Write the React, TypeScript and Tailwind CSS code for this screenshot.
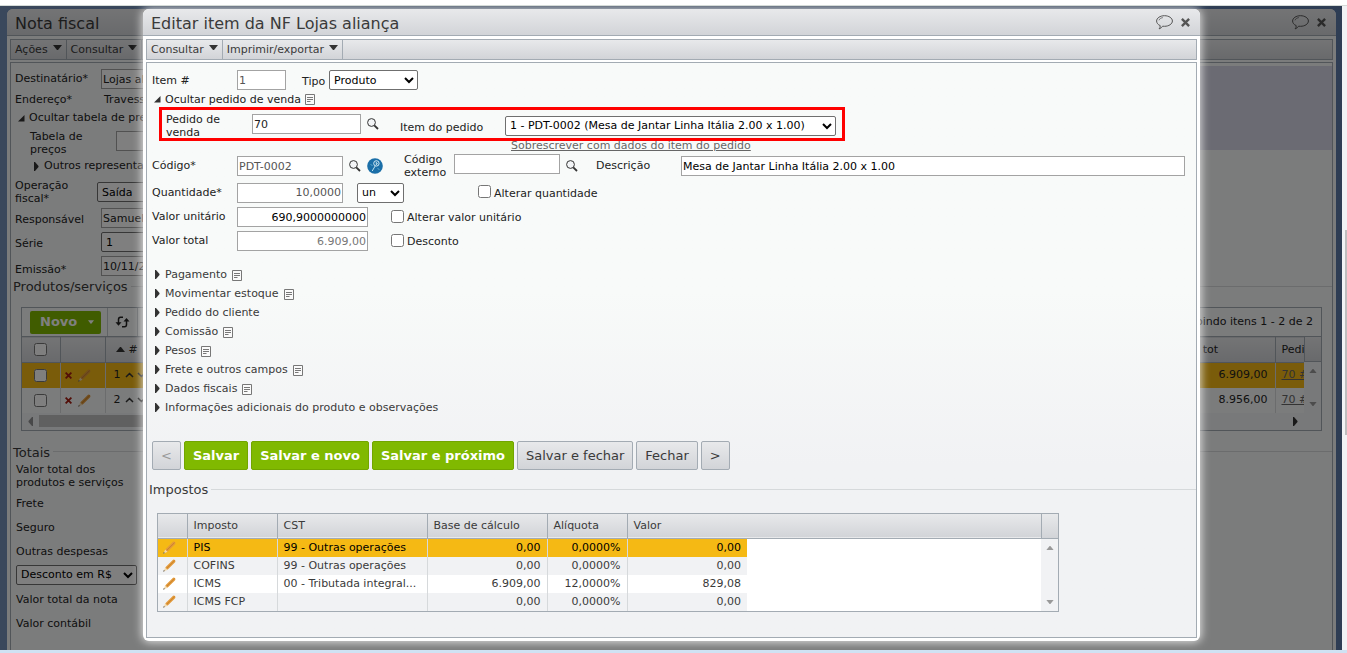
import type { ReactNode } from 'react';
import clsx from 'clsx';

interface IconProps {
  className?: string;
}

interface TaxRow {
  name: string;
  cst: string;
  base: string;
  rate: string;
  value: string;
}

interface SectionItem {
  label: string;
  note: boolean;
}

const sections: SectionItem[] = [
  { label: 'Pagamento', note: true },
  { label: 'Movimentar estoque', note: true },
  { label: 'Pedido do cliente', note: false },
  { label: 'Comissão', note: true },
  { label: 'Pesos', note: true },
  { label: 'Frete e outros campos', note: true },
  { label: 'Dados fiscais', note: true },
  { label: 'Informações adicionais do produto e observações', note: false },
];

const taxes: TaxRow[] = [
  { name: 'PIS', cst: '99 - Outras operações', base: '0,00', rate: '0,0000%', value: '0,00' },
  { name: 'COFINS', cst: '99 - Outras operações', base: '0,00', rate: '0,0000%', value: '0,00' },
  { name: 'ICMS', cst: '00 - Tributada integral...', base: '6.909,00', rate: '12,0000%', value: '829,08' },
  { name: 'ICMS FCP', cst: '', base: '0,00', rate: '0,0000%', value: '0,00' },
];

const items = [
  { id: '1', total: '6.909,00' },
  { id: '2', total: '8.956,00' },
];

const bar = 'bg-linear-to-b from-[#e8e9eb] to-[#d2d4d8]';
const field = 'h-5 border border-[#a3a3a3] bg-white px-px text-[11px]';
const dropdown = 'h-5 rounded-[2px] border border-[#6f6f6f] bg-white text-[11px] text-black';

function SearchIcon() {
  return (
    <svg className="h-3 w-3" viewBox="0 0 12 12" fill="none" stroke="#333">
      <circle cx="4.5" cy="4.5" r="3.9" fill="#f3f5f7" />
      <path d="M7.3 7.3 11 11" strokeWidth="1.8" />
    </svg>
  );
}

function NoteIcon() {
  return (
    <svg className="h-[11px] w-[10px]" viewBox="0 0 10 11" fill="none" stroke="#777">
      <path d="M.5.5h9v10h-9z" fill="#fafafa" />
      <path d="M2 3.5h6M2 5.5h6M2 7.5h3.5" />
    </svg>
  );
}

function PencilIcon() {
  return (
    <svg className="h-[13px] w-[13px]" viewBox="0 0 13 13">
      <path d="M2.2 8.6 9.8 1q1-.8 2.1.1t.2 2.2l-7.6 7.5z" fill="#e39a3b" />
      <path d="M3.4 9.7 11.6 1.6" stroke="#c07a25" strokeWidth=".7" />
      <path d="m2.2 8.6 2.3 2.2-4.2 1.9z" fill="#f3d9ac" />
      <path d="m.9 11 .9.9-1.6.9z" fill="#444" />
    </svg>
  );
}

function BubbleIcon() {
  return (
    <svg className="h-[15px] w-[17px]" viewBox="0 0 17 15" fill="none" stroke="#555">
      <path d="M4.2 10.6C2 9.7.6 8 .6 6 .6 3.100 4.100.7 8.500.7s7.900 2.400 7.900 5.300-3.500 5.300-7.900 5.300c-.7 0-1.300 0-1.900-.1-.7 1.200-2 2.200-3.500 2.700.8-.9 1.200-2 1.100-3.300z" />
      <path d="M3 5.300C3.400 3.800 5 2.900 6.800 2.600" strokeWidth=".8" />
    </svg>
  );
}

function CloseIcon() {
  return (
    <svg className="h-[9px] w-[9px]" viewBox="0 0 9 9" stroke="#555" strokeWidth="2.4">
      <path d="m.9.9 7.2 7.2M8.1.9.9 8.1" />
    </svg>
  );
}

function LookupIcon() {
  return (
    <svg className="h-4 w-4" viewBox="0 0 16 16" fill="none">
      <circle cx="8" cy="8" r="7.8" fill="#1b6fa8" />
      <circle cx="9.4" cy="5.4" r="2.7" stroke="#d5ecf5" />
      <path d="M8.2 8 5.2 13M9.3 3.8v3l1.500-1.500" stroke="#bfe3ef" />
      <path d="m3.500 6.500 2 1M10.500 10.500l2 1" stroke="#5fa9cc" />
    </svg>
  );
}

function RefreshIcon() {
  return (
    <svg className="h-3 w-[15px]" viewBox="0 0 15 12" fill="none" stroke="#222" strokeWidth="1.5">
      <path d="M8 1.200H5.500Q3.500 1.200 3.500 3.500v4M7 10.800h2.500q2 0 2-2.300v-4" />
      <path d="M.5 6.200h6l-3 3.600zM8.500 5.600h6l-3-3.600z" fill="#222" stroke="none" />
    </svg>
  );
}

function Triangle({ className }: IconProps) {
  return (
    <svg className={clsx('h-[9px] w-[5px]', className)} viewBox="0 0 5 9" fill="#333">
      <path d="M0 0h1l3.500 4v1L1 9H0z" />
    </svg>
  );
}

function OpenTriangle() {
  return (
    <svg className="h-[7px] w-[7px]" viewBox="0 0 7 7" fill="#333">
      <path d="M6.500 0v6.500H0z" />
    </svg>
  );
}

function Caret({ up = false, className = 'h-[5px] w-[9px] text-[#333]' }: { up?: boolean; className?: string }) {
  return (
    <svg className={className} viewBox="0 0 9 5" fill="currentColor">
      <path d={up ? 'M0 5 4 0h1l4 5z' : 'M0 0h9L5 5H4z'} />
    </svg>
  );
}

function TitleBar({ title }: { title: string }) {
  return (
    <header className={clsx('flex h-[27px] items-center justify-between rounded-t-md border-b border-[#a3abb3] pr-[10px] pl-2', bar)}>
      <h2 className="pt-1 text-[16px] leading-5 text-[#3a3a3a]">{title}</h2>
      <div className="flex items-center gap-2">
        <button aria-label="Comentários"><BubbleIcon /></button>
        <button aria-label="Fechar janela"><CloseIcon /></button>
      </div>
    </header>
  );
}

function MenuBar({ entries }: { entries: string[] }) {
  return (
    <nav className={clsx('mx-[3px] mt-[3px] flex h-[21px] border border-[#a3abb3]', bar)}>
      {entries.map((entry) => (
        <button key={entry} className="flex items-center gap-[5px] border-r border-[#a3abb3] px-1 text-[#3a3a3a]">
          {entry}
          <span className="pb-1"><Caret /></span>
        </button>
      ))}
    </nav>
  );
}

function Legend({ children }: { children: ReactNode }) {
  return (
    <div className="flex items-center gap-[3px] pl-[2px] text-[13px] leading-4 text-[#3a3a3a]">
      <h3>{children}</h3>
      <div className="mb-[2px] h-px flex-1 bg-[#d6d9db]" />
    </div>
  );
}

function ActionButton({ children, primary = false, disabled = false }: { children: ReactNode; primary?: boolean; disabled?: boolean }) {
  return (
    <button
      disabled={disabled}
      className={clsx(
        'h-[29px] rounded-[2px] border px-2 text-[13px]',
        primary ? 'border-[#72a500] bg-[#80b900] font-bold text-white' : clsx('border-[#a3abb3]', bar),
        !primary && (disabled ? 'text-[#999]' : 'text-[#3a3a3a]')
      )}
    >
      {children}
    </button>
  );
}

function CheckOption({ label, className }: { label: string; className: string }) {
  return (
    <label className={clsx('flex items-center gap-[3px]', className)}>
      <input type="checkbox" className="mb-[2px] h-[13px] w-[13px]" />
      <span className="pt-[2px]">{label}</span>
    </label>
  );
}

function InvoiceItems() {
  return (
    <div className="mx-[10px] mt-3 border border-[#a3abb3]">
      <div className="flex h-7 items-center pr-2 pl-2">
        <button className="flex h-[23px] w-[71px] items-center justify-between rounded-[2px] bg-[#80b900] pr-[7px] pl-[10px] text-[13px] font-bold text-white">
          Novo <Caret className="h-[6px] w-[6px] text-white" />
        </button>
        <button aria-label="Atualizar" className="ml-[6px] flex h-full w-[31px] items-center justify-center border-x border-[#c3c8cd]">
          <RefreshIcon />
        </button>
        <span className="ml-auto">Exibindo itens 1 - 2 de 2</span>
      </div>
      <div className="flex">
        <div className="min-w-0 flex-1">
          <table className="w-full table-fixed text-left">
            <colgroup>
              <col className="w-[38px]" />
              <col className="w-[45px]" />
              <col />
              <col className="w-[110px]" />
              <col className="w-[29px]" />
            </colgroup>
            <thead>
              <tr className={clsx('h-[26px] border-y border-[#a3abb3]', bar)}>
                <th className="border-r border-[#a3abb3] text-center"><input type="checkbox" aria-label="Selecionar todos" className="mx-auto block h-[13px] w-[13px]" /></th>
                <th className="border-r border-[#a3abb3]" />
                <th className="border-r border-[#a3abb3] pl-[10px] font-normal"><span className="flex items-center gap-1"><Caret up /> #</span></th>
                <th className="border-r border-[#a3abb3] pl-[6px] font-normal">Valor tot</th>
                <th className="overflow-hidden pl-[6px] font-normal whitespace-nowrap">Pedido</th>
              </tr>
            </thead>
            <tbody>
              {items.map((item, index) => (
                <tr key={item.id} className={clsx('h-[25px]', index === 0 && 'bg-[#f5b914]')}>
                  <td className="border-r border-[#d6d9db]"><input type="checkbox" aria-label={`Selecionar item ${item.id}`} className="ml-3 block h-[13px] w-[13px]" /></td>
                  <td className="border-r border-[#d6d9db]">
                    <div className="flex items-center gap-[6px] pl-1">
                      <button aria-label="Excluir">
                        <svg className="h-[7px] w-[7px]" viewBox="0 0 7 7" stroke="#a51c10" strokeWidth="1.8"><path d="m.6.6 5.800 5.800M6.400.6.6 6.400" /></svg>
                      </button>
                      <button aria-label="Editar"><PencilIcon /></button>
                    </div>
                  </td>
                  <td className="pl-2">
                    <span className="flex items-center gap-1">
                      {item.id}
                      <svg className="h-[6px] w-5" viewBox="0 0 20 6" fill="none" stroke="#333" strokeWidth="1.5"><path d="m1 5 3.500-3.500L8 5M13 1l3.500 3.500L20 1" /></svg>
                    </span>
                  </td>
                  <td className="border-r border-[#d6d9db] pr-[7px] text-right">{item.total}</td>
                  <td className="overflow-hidden pl-[6px] whitespace-nowrap"><a href="#" className="text-[#666] underline">70 #1</a></td>
                </tr>
              ))}
            </tbody>
          </table>
        </div>
        <div className="flex w-[17px] flex-col">
          <div className={clsx('h-[26px] border-y border-l border-[#a3abb3]', bar)} />
          <div className="flex flex-1 flex-col items-center justify-between bg-[#f1f2f4] py-[7px]">
            <Caret up className="h-1 w-2 text-[#999]" />
            <Caret className="h-1 w-2 text-[#999]" />
          </div>
        </div>
      </div>
      <div className="flex h-[17px] items-center bg-[#f1f2f4] pl-[6px]">
        <Triangle className="rotate-180 opacity-50" />
        <div className="ml-[6px] h-3 w-3/5 bg-[#c1c1c1]" />
        <Triangle className="mr-[23px] ml-auto" />
      </div>
    </div>
  );
}

function InvoiceWindow() {
  return (
    <section className="mr-[6px] ml-[7px] flex-1 rounded-t-md bg-[#f7f8f8] text-[#222]">
      <TitleBar title="Nota fiscal" />
      <MenuBar entries={['Ações', 'Consultar']} />
      <div className="mx-[3px] mt-[2px] min-h-full border border-[#a3abb3]">
        <div className="flex justify-between pt-[3px]">
          <div className="pl-1">
            <div className="flex h-[26px] items-center">
              <label htmlFor="dest" className="w-[86px]">Destinatário*</label>
              <input id="dest" className={clsx(field, 'w-[220px]')} defaultValue="Lojas aliança" />
            </div>
            <div className="flex h-4 items-center">
              <span className="w-[89px]">Endereço*</span>
              <span>Travessa</span>
            </div>
            <button className="flex h-5 items-center gap-1 pl-[3px]"><OpenTriangle />Ocultar tabela de preços</button>
            <div className="flex h-[30px] items-center pl-[15px]">
              <label htmlFor="precos" className="w-[86px] pr-6 leading-[13px]">Tabela de preços</label>
              <input id="precos" className={clsx(field, 'mb-1 w-[180px]')} />
            </div>
            <button className="flex h-4 items-center gap-[5px] pl-[19px]"><Triangle />Outros representantes</button>
            <div className="flex h-8 items-center pt-1">
              <label htmlFor="operacao" className="w-[82px] pr-5 leading-[13px]">Operação fiscal*</label>
              <select id="operacao" className={clsx(dropdown, 'w-[110px]')}><option>Saída</option></select>
            </div>
            <div className="flex h-6 items-center">
              <label htmlFor="resp" className="w-[86px] pt-1">Responsável</label>
              <input id="resp" className={clsx(field, 'w-[220px]')} defaultValue="Samuel" />
            </div>
            <div className="flex h-6 items-center">
              <label htmlFor="serie" className="w-[86px] pt-1">Série</label>
              <select id="serie" className={clsx(dropdown, 'w-[110px]')}><option>1</option></select>
            </div>
            <div className="flex h-6 items-center">
              <label htmlFor="emissao" className="w-[86px] pt-2">Emissão*</label>
              <input id="emissao" className={clsx(field, 'w-[110px]')} defaultValue="10/11/2021" />
            </div>
          </div>
          <div className="h-[84px] w-1/3 bg-[#d6d6e6]" />
        </div>
        <div className="mt-px"><Legend>Produtos/serviços</Legend></div>
        <InvoiceItems />
        <div className="mt-[14px]"><Legend>Totais</Legend></div>
        <div className="flex flex-col items-start pl-[5px]">
          <span className="mt-[2px] w-[125px] leading-[13px]">Valor total dos produtos e serviços</span>
          <span className="mt-[3px] leading-6">Frete</span>
          <span className="leading-6">Seguro</span>
          <span className="leading-6">Outras despesas</span>
          <select aria-label="Tipo de desconto" className={clsx(dropdown, 'my-px w-[121px]')}><option>Desconto em R$</option></select>
          <span className="mt-[2px] leading-6">Valor total da nota</span>
          <span className="leading-6">Valor contábil</span>
        </div>
      </div>
    </section>
  );
}

function OrderFields() {
  return (
    <>
      <button className="ml-[7px] flex h-[15px] items-center gap-1">
        <OpenTriangle />
        Ocultar pedido de venda
        <NoteIcon />
      </button>
      <div className="ml-3 flex h-[34px] w-[686px] items-center border-3 border-[#ff0000] pl-1">
        <label htmlFor="pedido" className="w-[86px] pt-1 pr-6 leading-[13px]">Pedido de venda</label>
        <input id="pedido" className={clsx(field, 'w-[109px]')} defaultValue="70" />
        <button aria-label="Buscar pedido" className="mx-[6px]"><SearchIcon /></button>
        <label htmlFor="itemPedido" className="ml-[15px] w-[105px] pt-2">Item do pedido</label>
        <select id="itemPedido" className={clsx(dropdown, 'mt-[3px] w-[331px]')}>
          <option>1 - PDT-0002 (Mesa de Jantar Linha Itália 2.00 x 1.00)</option>
        </select>
      </div>
      <div className="flex h-[11px] items-center pb-[2px] pl-[364px] leading-3">
        <a href="#" className="text-[#666] underline">Sobrescrever com dados do item do pedido</a>
      </div>
    </>
  );
}

function ProductFields() {
  return (
    <>
      <div className="flex h-7 items-center pr-[11px] pl-[5px]">
        <label htmlFor="codigo" className="w-[85px]">Código*</label>
        <input id="codigo" className={clsx(field, 'w-[106px] text-[#555]')} defaultValue="PDT-0002" />
        <button aria-label="Buscar código" className="ml-[6px]"><SearchIcon /></button>
        <button aria-label="Consultar produto" className="ml-[6px]"><LookupIcon /></button>
        <label htmlFor="externo" className="ml-[21px] w-[50px] leading-[13px]">Código externo</label>
        <input id="externo" className={clsx(field, 'mb-1 w-[106px]')} />
        <button aria-label="Buscar código externo" className="ml-[6px]"><SearchIcon /></button>
        <label htmlFor="descricao" className="ml-[18px] w-[85px]">Descrição</label>
        <input id="descricao" className={clsx(field, 'min-w-0 flex-1 text-black')} defaultValue="Mesa de Jantar Linha Itália 2.00 x 1.00" />
      </div>
      <div className="flex h-[25px] items-center pl-[5px]">
        <label htmlFor="quantidade" className="w-[85px]">Quantidade*</label>
        <input id="quantidade" className={clsx(field, 'w-[106px] text-right text-[#555]')} defaultValue="10,0000" />
        <select aria-label="Unidade" className={clsx(dropdown, 'ml-[14px] w-[47px]')}><option>un</option></select>
        <CheckOption label="Alterar quantidade" className="ml-[74px]" />
      </div>
      <div className="flex h-6 items-center pl-[5px]">
        <label htmlFor="unitario" className="w-[85px]">Valor unitário</label>
        <input id="unitario" className={clsx(field, 'w-[131px] text-right text-black')} defaultValue="690,9000000000" />
        <CheckOption label="Alterar valor unitário" className="ml-[23px]" />
      </div>
      <div className="flex h-6 items-center pl-[5px]">
        <label htmlFor="total" className="w-[85px]">Valor total</label>
        <input id="total" className={clsx(field, 'w-[131px] text-right text-[#777]')} defaultValue="6.909,00" />
        <CheckOption label="Desconto" className="ml-[23px]" />
      </div>
    </>
  );
}

function TaxTable() {
  const head = 'border-r border-[#a3abb3] pl-[6px] font-normal';
  const cell = 'border-r border-[#d6d9db]';

  return (
    <div className="mt-[15px] ml-[10px] flex w-[902px] border border-[#a3abb3] bg-white">
      <table className="w-[883px] table-fixed text-left text-[#3a3a3a]">
        <colgroup>
          <col className="w-[29px]" />
          <col className="w-[90px]" />
          <col className="w-[150px]" />
          <col className="w-[120px]" />
          <col className="w-[80px]" />
          <col className="w-[120px]" />
          <col />
        </colgroup>
        <thead>
          <tr className={clsx('h-6 border-b border-[#a3abb3]', bar)}>
            <th className={head} />
            <th className={head}>Imposto</th>
            <th className={head}>CST</th>
            <th className={head}>Base de cálculo</th>
            <th className={head}>Alíquota</th>
            <th className="pl-[6px] font-normal" colSpan={2}>Valor</th>
          </tr>
        </thead>
        <tbody>
          {taxes.map((tax, index) => {
            const fill = index === 0 ? 'bg-[#f5b914] text-black' : index === 2 ? 'bg-white' : 'bg-[#f1f2f4]';
            return (
              <tr key={tax.name} className="h-[18px] leading-[18px]">
                <td className={clsx(cell, fill)}>
                  <button aria-label={`Editar ${tax.name}`} className="ml-[5px] block"><PencilIcon /></button>
                </td>
                <td className={clsx(cell, fill, 'pl-[6px]')}>{tax.name}</td>
                <td className={clsx(cell, fill, 'pl-[6px]')}>{tax.cst}</td>
                <td className={clsx(cell, fill, 'pr-[6px] text-right')}>{tax.base}</td>
                <td className={clsx(cell, fill, 'pr-[6px] text-right')}>{tax.rate}</td>
                <td className={clsx(fill, 'pr-[6px] text-right')}>{tax.value}</td>
                <td />
              </tr>
            );
          })}
        </tbody>
      </table>
      <div className="flex flex-1 flex-col">
        <div className={clsx('h-[25px] border-b border-l border-[#a3abb3]', bar)} />
        <div className="flex flex-1 flex-col items-center justify-between bg-[#f1f2f4] py-[7px]">
          <Caret up className="h-1 w-2 text-[#999]" />
          <Caret className="h-1 w-2 text-[#999]" />
        </div>
      </div>
    </div>
  );
}

function ItemDialog() {
  return (
    <div role="dialog" aria-label="Editar item da NF" className="w-full self-start rounded-md bg-white pb-[3px] shadow-[0_0_10px_1px_rgba(255,255,255,0.8)]">
      <TitleBar title="Editar item da NF Lojas aliança" />
      <MenuBar entries={['Consultar', 'Imprimir/exportar']} />
      <div className="mx-[3px] mt-[2px] border border-[#a3abb3] bg-linear-to-b from-[#f8faf9] from-40% to-[#f1f2f4] to-70% pb-[25px] text-[#222]">
        <div className="flex h-[29px] items-center pt-[5px] pl-[5px]">
          <label htmlFor="item" className="w-[85px] pt-[2px]">Item #</label>
          <input id="item" className={clsx(field, 'w-[49px] text-[#555]')} defaultValue="1" />
          <label htmlFor="tipo" className="ml-4 w-[27px] pt-1">Tipo</label>
          <select id="tipo" className={clsx(dropdown, 'w-[89px]')}><option>Produto</option></select>
        </div>
        <OrderFields />
        <ProductFields />
        <ul className="mt-3 pl-2 text-[#3a3a3a]">
          {sections.map((section) => (
            <li key={section.label}>
              <button className="flex h-[19px] items-center gap-[5px]">
                <Triangle />
                {section.label}
                {section.note && <span className="pt-[2px]"><NoteIcon /></span>}
              </button>
            </li>
          ))}
        </ul>
        <div className="mt-6 mb-3 flex gap-[3px] pl-[5px]">
          <ActionButton disabled>&lt;</ActionButton>
          <ActionButton primary>Salvar</ActionButton>
          <ActionButton primary>Salvar e novo</ActionButton>
          <ActionButton primary>Salvar e próximo</ActionButton>
          <ActionButton>Salvar e fechar</ActionButton>
          <ActionButton>Fechar</ActionButton>
          <ActionButton>&gt;</ActionButton>
        </div>
        <Legend>Impostos</Legend>
        <TaxTable />
      </div>
    </div>
  );
}

export default function App() {
  return (
    <div className="flex h-screen flex-col overflow-hidden bg-white font-['Verdana','DejaVu_Sans',sans-serif] text-[11px] leading-[14px]">
      <div className="h-[6px] border-b border-[#d5dbd8] bg-white" />
      <div className="flex min-h-0 flex-1">
        <main className="relative flex min-w-0 flex-1 overflow-hidden bg-linear-to-r from-[#7590b8] to-[#5d7ba8] pt-[3px]">
          <InvoiceWindow />
          <div className="absolute inset-0 flex bg-black/50 pt-[3px] pr-[142px] pl-[143px]">
            <ItemDialog />
          </div>
        </main>
        <div className="flex w-[5px] justify-end bg-[#f1f2f4] pt-[224px]">
          <div className="h-[205px] w-[2px] bg-[#bdbdbd]" />
        </div>
      </div>
      <div className="h-[3px] bg-[#cfe2f3]" />
    </div>
  );
}
